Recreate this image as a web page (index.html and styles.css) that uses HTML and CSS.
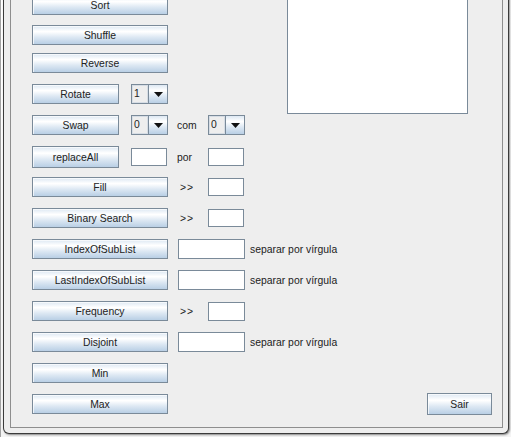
FILE: index.html
```html
<!DOCTYPE html>
<html>
<head>
<meta charset="utf-8">
<link rel="stylesheet" href="styles.css">
</head>
<body>
<div class="frame">
  <div class="window">
    <div class="panel">
      <div class="top">
        <div class="col">
          <button class="btn wide">Sort</button>
          <button class="btn wide mt10">Shuffle</button>
          <button class="btn wide mt8">Reverse</button>
          <div class="row mt11">
            <button class="btn narrow">Rotate</button>
            <div class="combo ml12"><span class="combo-val">1</span><span class="combo-arrow"><svg width="9" height="5" viewBox="0 0 9 5"><polygon points="0,0 9,0 4.5,5" fill="#111"/></svg></span></div>
          </div>
        </div>
        <div class="listbox"></div>
      </div>

      <div class="row mt1">
        <button class="btn narrow">Swap</button>
        <div class="combo ml12"><span class="combo-val">0</span><span class="combo-arrow"><svg width="9" height="5" viewBox="0 0 9 5"><polygon points="0,0 9,0 4.5,5" fill="#111"/></svg></span></div>
        <span class="lbl lbl-com">com</span>
        <div class="combo"><span class="combo-val">0</span><span class="combo-arrow"><svg width="9" height="5" viewBox="0 0 9 5"><polygon points="0,0 9,0 4.5,5" fill="#111"/></svg></span></div>
      </div>

      <div class="row row22 mt11">
        <button class="btn narrow tall">replaceAll</button>
        <input class="field small ml12" type="text">
        <span class="lbl lbl-por">por</span>
        <input class="field small" type="text">
      </div>

      <div class="row mt9">
        <button class="btn wide">Fill</button>
        <span class="lbl lbl-gt">&gt;&gt;</span>
        <input class="field small" type="text">
      </div>

      <div class="row mt11">
        <button class="btn wide">Binary Search</button>
        <span class="lbl lbl-gt">&gt;&gt;</span>
        <input class="field small" type="text">
      </div>

      <div class="row mt11">
        <button class="btn wide">IndexOfSubList</button>
        <input class="field big" type="text">
        <span class="lbl lbl-hint">separar por vírgula</span>
      </div>

      <div class="row mt11">
        <button class="btn wide">LastIndexOfSubList</button>
        <input class="field big" type="text">
        <span class="lbl lbl-hint">separar por vírgula</span>
      </div>

      <div class="row mt11">
        <button class="btn wide">Frequency</button>
        <span class="lbl lbl-gt">&gt;&gt;</span>
        <input class="field small freq" type="text">
      </div>

      <div class="row mt11">
        <button class="btn wide">Disjoint</button>
        <input class="field big" type="text">
        <span class="lbl lbl-hint">separar por vírgula</span>
      </div>

      <div class="row mt11">
        <button class="btn wide">Min</button>
      </div>

      <div class="row row22 mt10">
        <button class="btn wide">Max</button>
        <button class="btn sair">Sair</button>
      </div>
    </div>
  </div>
</div>
</body>
</html>
```

FILE: styles.css
```css
* { box-sizing: border-box; }

html, body {
  margin: 0;
  padding: 0;
  background: #f6f6f6;
}

body {
  font-family: "Liberation Sans", Arial, sans-serif;
  font-size: 10.4px;
  color: #222;
}

.frame {
  width: 511px;
  height: 437px;
  overflow: hidden;
  border-left: 1px solid #a3a3a3;
  padding-left: 2px;
  background: linear-gradient(#ffffff, #f4f4f4);
}

.window {
  width: 506px;
  margin-top: -30px;
  background: #eeeeee;
  border: 1px solid #3b3b3b;
  border-top: none;
  border-radius: 0 0 6px 6px;
  padding: 0 5px 5px 6px;
  box-shadow: 1px 1px 2px rgba(0, 0, 0, 0.45);
}

.panel {
  border: 1px solid #8e8e8e;
  padding: 24px 10px 12px 21px;
  background: #eeeeee;
}

.top {
  display: flex;
  align-items: flex-start;
}

.col {
  display: flex;
  flex-direction: column;
  width: 136px;
}

.listbox {
  margin-left: 119px;
  width: 181px;
  height: 119px;
  background: #ffffff;
  border: 1px solid #7a8a99;
}

.row {
  display: flex;
  align-items: center;
  height: 20px;
}

.row22 { height: 22px; }

.btn {
  font-family: inherit;
  font-size: inherit;
  color: #222;
  padding: 0;
  margin: 0;
  height: 20px;
  border: 1px solid #7a8a99;
  border-radius: 0;
  background: linear-gradient(#dde8f3 0%, #ffffff 30%, #ffffff 32%, #dde8f3 62%, #b9cfe5 100%);
  box-shadow: inset 1px 1px 0 rgba(255, 255, 255, 0.7);
  display: flex;
  align-items: center;
  justify-content: center;
  flex: none;
}

.wide { width: 136px; }
.narrow { width: 87px; }
.tall { height: 22px; }

.sair {
  margin-left: auto;
  width: 65px;
  height: 22px;
}

.combo {
  display: flex;
  width: 37px;
  height: 20px;
  border: 1px solid #7a8a99;
  flex: none;
}

.combo-val {
  width: 16px;
  height: 18px;
  background: #eeeeee;
  box-shadow: inset 0 0 0 1px #d6dde5;
  padding-left: 2px;
  line-height: 17px;
  font-size: 10.4px;
}

.combo-arrow {
  width: 19px;
  height: 18px;
  border-left: 1px solid #7a8a99;
  background: linear-gradient(#dde8f3 0%, #ffffff 30%, #ffffff 32%, #dde8f3 62%, #b9cfe5 100%);
  display: flex;
  align-items: center;
  justify-content: center;
  padding-top: 1px;
}

.combo-arrow svg { display: block; }

.field {
  margin: 0;
  padding: 0;
  border: 1px solid #7a8a99;
  border-radius: 0;
  background: #ffffff;
  outline: none;
  flex: none;
}

.small {
  width: 36px;
  height: 18px;
}

.freq {
  width: 37px;
  height: 19px;
}

.big {
  margin-left: 10px;
  width: 67px;
  height: 20px;
}

.lbl {
  flex: none;
  white-space: nowrap;
}

.lbl-com {
  margin-left: 9px;
  width: 31px;
}

.lbl-por {
  margin-left: 10px;
  width: 31px;
}

.lbl-gt {
  margin-left: 12px;
  width: 28px;
  letter-spacing: 1px;
}

.lbl-hint {
  margin-left: 5px;
}

/* spacing utilities (declared last so they win) */
.mt1 { margin-top: 1px; }
.mt8 { margin-top: 8px; }
.mt9 { margin-top: 9px; }
.mt10 { margin-top: 10px; }
.mt11 { margin-top: 11px; }
.ml12 { margin-left: 12px; }
```
